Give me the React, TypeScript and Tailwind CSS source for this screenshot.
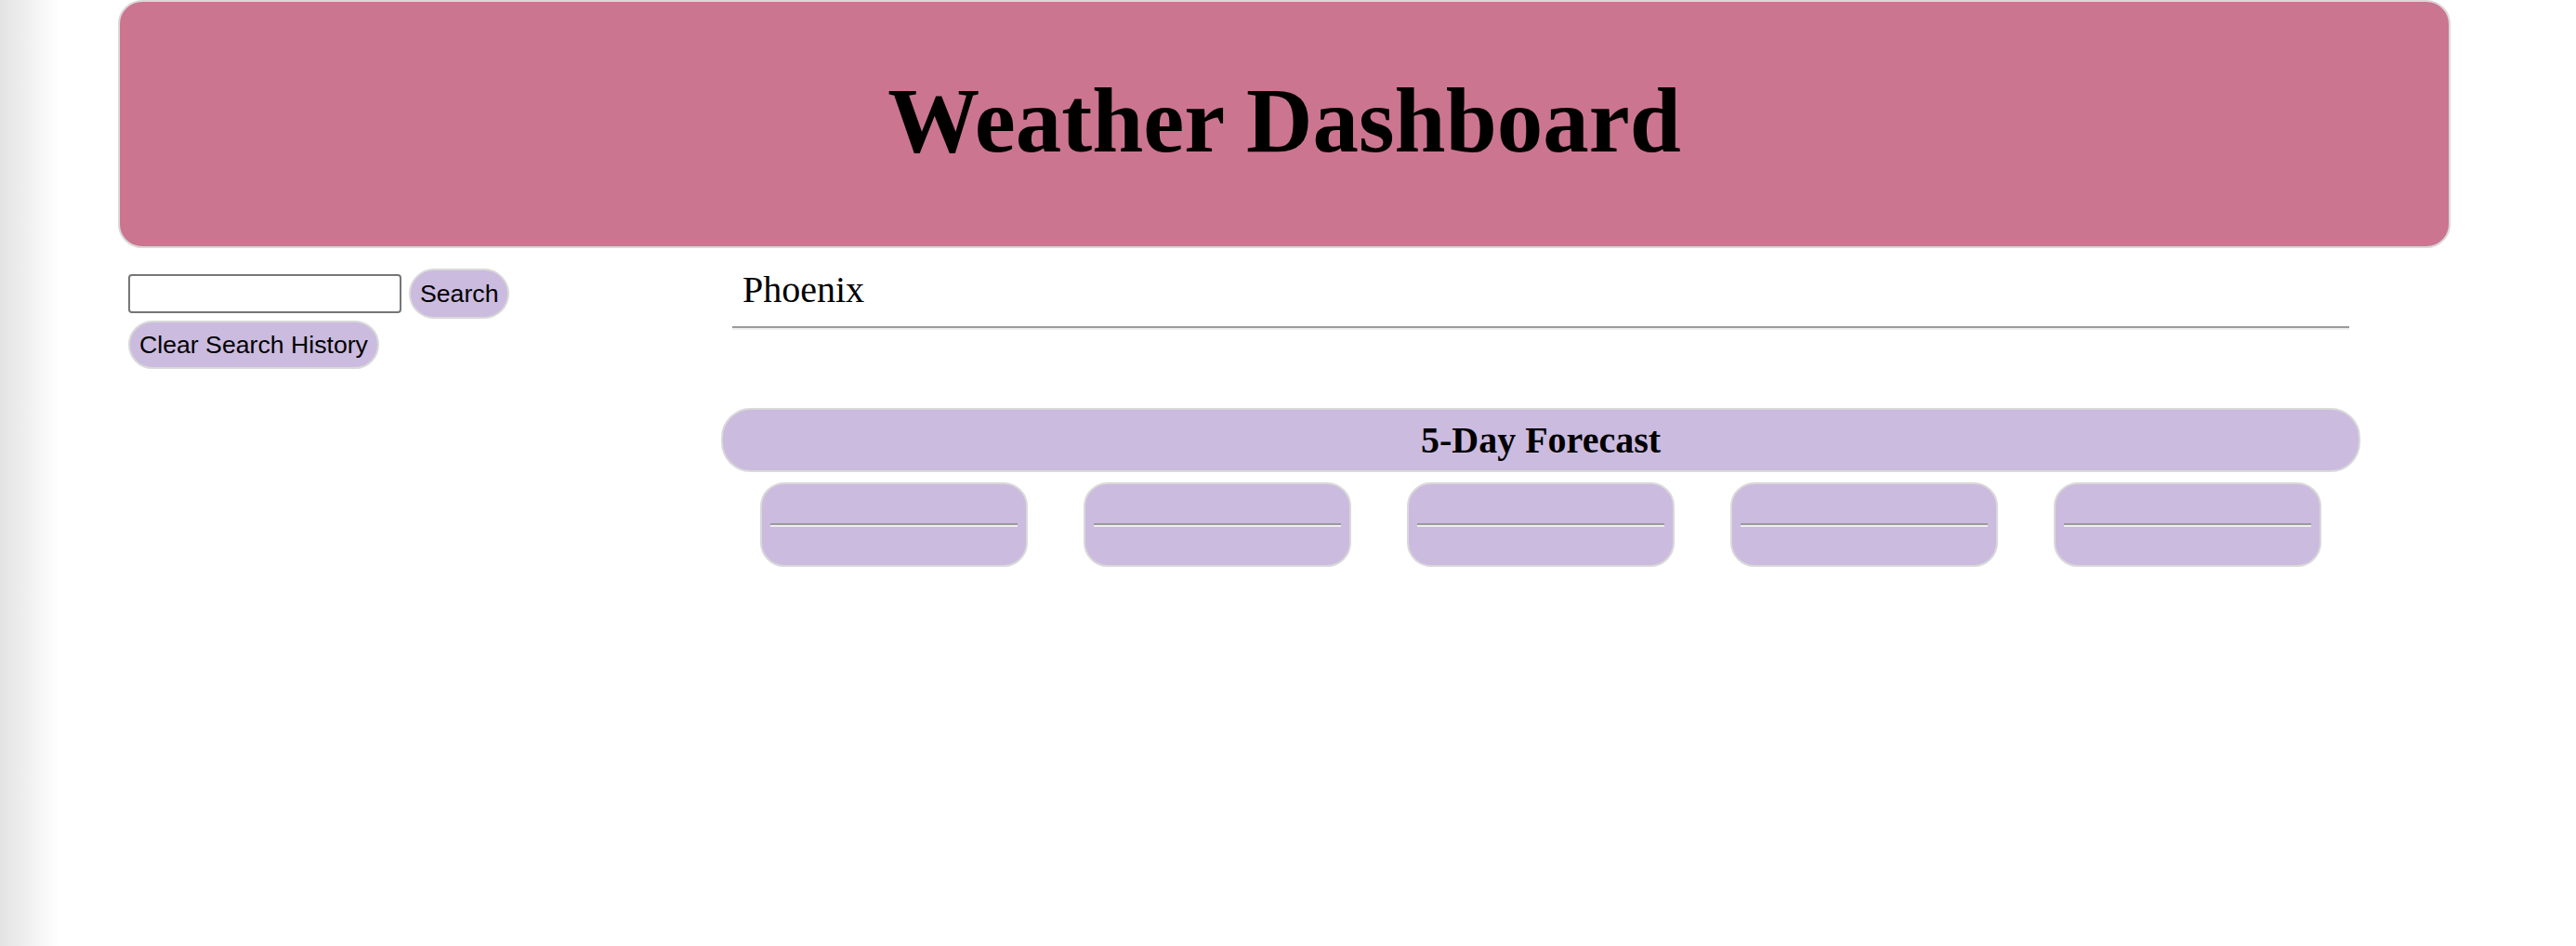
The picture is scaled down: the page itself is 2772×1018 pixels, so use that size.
import { useState } from "react";

const DAYS = [1, 2, 3, 4, 5];

function ForecastCard() {
  return (
    <div className="flex h-[91px] w-[288px] items-center rounded-[26px] border-2 border-[#d9d9d9] bg-[#cbbbdf] px-[9px]">
      <div className="h-[4px] flex-1 border-t-2 border-b-2 border-t-[#9a9a9a] border-b-[#eeeeee]" />
    </div>
  );
}

export default function App() {
  const [city, setCity] = useState("");

  return (
    <div className="relative min-h-screen bg-white font-['Liberation_Serif','Times_New_Roman',serif] text-black">
      {/* window edge shade */}
      <div className="pointer-events-none absolute inset-y-0 left-0 w-[64px] bg-linear-to-r from-[#e3e3e3] to-white" />

      <header className="ml-[127px] h-[267px] w-[2510px] rounded-[26px] border-2 border-[#d9d9d9] bg-[#cc7590] pt-[78px] text-center">
        <h1 className="text-[99px] font-bold leading-none">Weather Dashboard</h1>
      </header>

      <main className="flex">
        <aside className="ml-[138px] w-[638px] pt-[22px] font-['Liberation_Sans',Arial,sans-serif] text-[26.67px]">
          <div className="flex items-center gap-[8px]">
            <input
              type="text"
              value={city}
              onChange={(e) => setCity(e.target.value)}
              className="h-[42px] w-[294px] rounded-[4px] border-2 border-[#767676] bg-white px-2 outline-none"
            />
            <button
              type="button"
              className="h-[54px] rounded-full border-2 border-[#d9d9d9] bg-[#cbbbdf] px-[10px] leading-none"
            >
              Search
            </button>
          </div>
          <button
            type="button"
            onClick={() => setCity("")}
            className="mt-[2px] h-[52px] rounded-full border-2 border-[#d9d9d9] bg-[#cbbbdf] px-[10px] leading-none"
          >
            Clear Search History
          </button>
        </aside>

        <section className="w-[1764px] pt-[22px]">
          <div className="px-[12px]">
            <h2 className="pl-[11px] text-[40px] leading-[46px]">Phoenix</h2>
            <div className="mt-[16px] h-[4px] border-t-2 border-b-2 border-t-[#9a9a9a] border-b-[#eeeeee]" />
          </div>

          <div className="mt-[84px] flex h-[69px] items-center justify-center rounded-[32px] border-2 border-[#d9d9d9] bg-[#cbbbdf]">
            <h3 className="text-[40px] font-bold leading-[46px]">5-Day Forecast</h3>
          </div>

          <div className="mt-[11px] flex gap-[60px] px-[42px]">
            {DAYS.map((d) => (
              <ForecastCard key={d} />
            ))}
          </div>
        </section>
      </main>
    </div>
  );
}
